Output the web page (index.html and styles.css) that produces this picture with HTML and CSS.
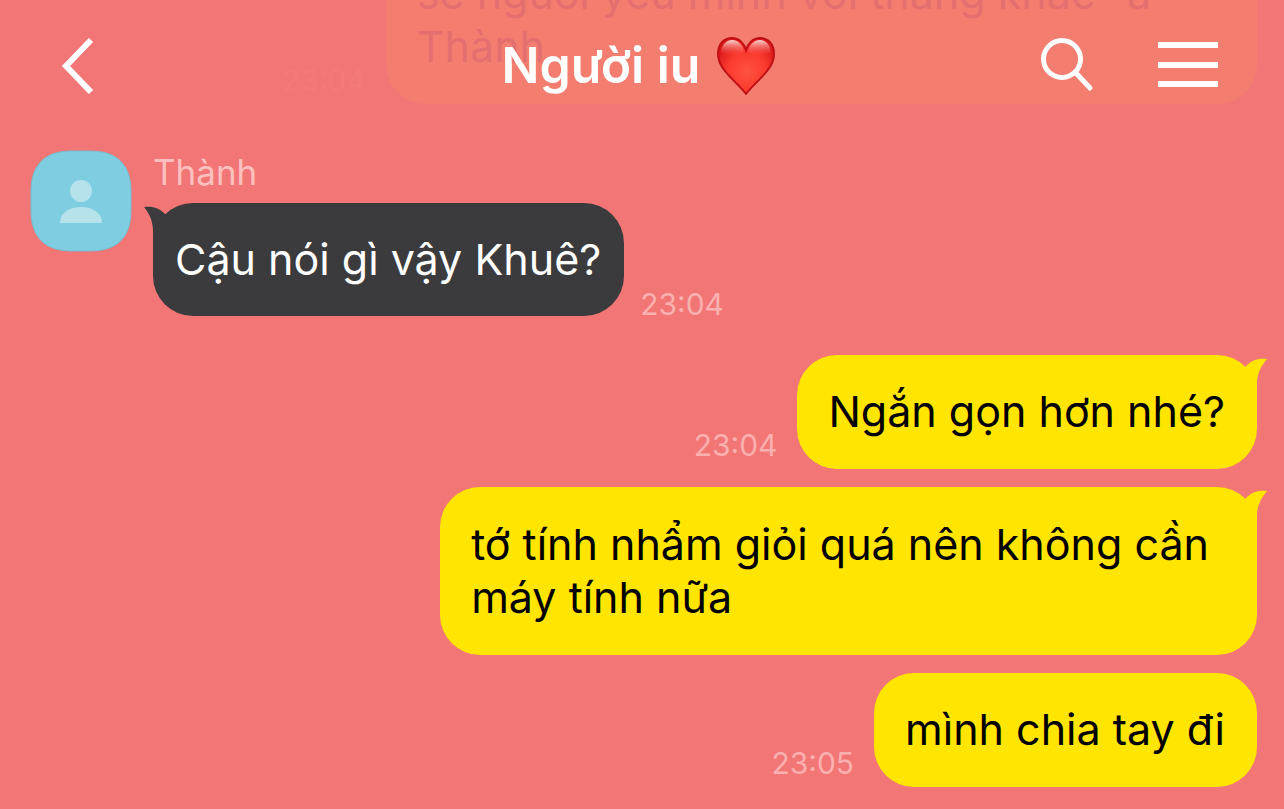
FILE: index.html
```html
<!DOCTYPE html>
<html lang="vi">
<head>
  <meta charset="UTF-8" />
  <meta name="viewport" content="width=device-width, initial-scale=1.0"/>
  <title>Người iu</title>
  <link rel="stylesheet" href="styles.css">
</head>
<body>
  <header class="topbar">
    <button type="button" class="icon-btn back" aria-label="Quay lại">
      <svg width="34" height="58" viewBox="0 0 34 58"><path d="M31 4 6 30l25 26" fill="none" stroke="#fff" stroke-width="6"/></svg>
    </button>
    <h1 class="title">
      Người iu
      <svg class="heart" width="60" height="60" viewBox="0 0 60 60" role="img" aria-label="Trái tim">
        <defs>
          <radialGradient id="heartFill" cx="52%" cy="60%" r="58%">
            <stop offset="0" stop-color="#ff5240"/>
            <stop offset="0.6" stop-color="#fb3a2e"/>
            <stop offset="1" stop-color="#dc1a1a"/>
          </radialGradient>
          <linearGradient id="heartShine" x1="0" y1="0" x2="0" y2="1">
            <stop offset="0" stop-color="#ffe9e4" stop-opacity="0.9"/>
            <stop offset="1" stop-color="#ff6a5c" stop-opacity="0"/>
          </linearGradient>
        </defs>
        <path d="M30 59C25 52 15 44 9 36 4 30 2 25 2 19 2 9 8 3 16 3c7 0 12 5 14 12C32 8 37 3 44 3c8 0 14 6 14 16 0 6-2 11-7 17C45 44 35 52 30 59Z" fill="url(#heartFill)" stroke="#c01015" stroke-width="2"/>
        <path d="M5 17C6 9 11 5 16 5c6 0 10 4 12 11-4 5-18 6-23 1Z" fill="url(#heartShine)"/>
        <path d="M55 17C54 9 49 5 44 5c-6 0-10 4-12 11 4 5 18 6 23 1Z" fill="url(#heartShine)"/>
      </svg>
    </h1>
    <div class="actions">
      <button type="button" class="icon-btn" aria-label="Tìm kiếm">
        <svg width="54" height="54" viewBox="0 0 54 54"><circle cx="22" cy="21" r="18.5" fill="none" stroke="#fff" stroke-width="5"/><path d="m35 34 15 16" stroke="#fff" stroke-width="5" stroke-linecap="round"/></svg>
      </button>
      <button type="button" class="icon-btn" aria-label="Menu">
        <svg width="60" height="46" viewBox="0 0 60 46"><path d="M0 3h60M0 23h60M0 42h60" stroke="#fff" stroke-width="6"/></svg>
      </button>
    </div>
  </header>

  <main class="chat">
    <div class="row mine">
      <time class="time">23:04</time>
      <p class="bubble">sẻ người yêu mình với thằng khác" à Thành</p>
    </div>

    <div class="row theirs">
      <svg class="avatar" width="102" height="102" viewBox="0 0 102 102">
        <path d="M41 1H61C87 1 101 15 101 41V61C101 87 87 101 61 101H41C15 101 1 87 1 61V41C1 15 15 1 41 1Z" fill="#7fcde0" stroke="#79bccd"/>
        <circle cx="51" cy="41" r="11" fill="#b6e2ec"/>
        <path d="M30 73c0-10 9-16 21-16s21 6 21 16Z" fill="#b6e2ec"/>
      </svg>
      <div class="content">
        <div class="name">Thành</div>
        <p class="bubble">
          <svg class="tail" width="30" height="40" viewBox="0 0 30 40"><path d="M0 4C9 3 15 5 21 11L30 20V40H9V28C9 18 5 10 0 4Z" fill="#3b3b3d"/></svg>
          Cậu nói gì vậy Khuê?
        </p>
      </div>
      <time class="time">23:04</time>
    </div>

    <div class="row mine">
      <time class="time">23:04</time>
      <p class="bubble">
        <svg class="tail" width="30" height="40" viewBox="0 0 30 40"><path d="M30 4C21 3 15 5 9 11L0 20V40H20V28C20 18 25 10 30 4Z" fill="#ffe500"/></svg>
        Ngắn gọn hơn nhé?
      </p>
    </div>

    <div class="row mine">
      <p class="bubble long">
        <svg class="tail" width="30" height="40" viewBox="0 0 30 40"><path d="M30 4C21 3 15 5 9 11L0 20V40H20V28C20 18 25 10 30 4Z" fill="#ffe500"/></svg>
        tớ tính nhẩm giỏi quá nên không cần<br>máy tính nữa
      </p>
    </div>

    <div class="row mine">
      <time class="time">23:05</time>
      <p class="bubble">mình chia tay đi</p>
    </div>
  </main>
</body>
</html>
```
FILE: styles.css
```css
* {
  box-sizing: border-box;
}
body {
  margin: 0;
  background: #f27676;
  font-family: Inter, 'Noto Sans', sans-serif;
  color: #000;
}

/* translucent bar, older messages show through it */
.topbar {
  position: fixed;
  top: 0;
  left: 0;
  right: 0;
  z-index: 2;
  display: grid;
  grid-template-columns: 1fr auto 1fr;
  align-items: center;
  height: 130px;
  padding: 0 66px 0 60px;
  background: rgba(242, 118, 118, 0.94);
}
.icon-btn {
  display: flex;
  padding: 0;
  border: none;
  background: none;
  cursor: pointer;
}
.back {
  justify-self: start;
}
.title {
  display: flex;
  align-items: center;
  gap: 16px;
  margin: 0;
  font-size: 50px;
  font-weight: 600;
  color: #fff;
}
.actions {
  display: flex;
  align-items: center;
  justify-content: flex-end;
  gap: 64px;
}

/* the thread sticks to its newest message */
.chat {
  display: flex;
  flex-direction: column;
  justify-content: flex-end;
  gap: 18px;
  height: 100vh;
  padding: 0 27px 22px 30px;
  overflow: hidden;
}
.row {
  display: flex;
  flex-shrink: 0;
  align-items: flex-end;
}
.mine {
  justify-content: flex-end;
  gap: 20px;
}
.theirs {
  gap: 16px;
  margin: 28px 0 21px;
}
.avatar {
  align-self: flex-start;
  margin-right: 5px;
}
.name {
  margin-bottom: 9px;
  font-size: 35px;
  line-height: 44px;
  color: #fcc0bf;
}
.bubble {
  position: relative;
  margin: 0;
  padding: 30px 32px 31px 31px;
  border-radius: 40px;
  font-size: 43px;
  line-height: 53px;
}
.mine .bubble {
  max-width: 71%;
  background: #ffe500;
}
.mine .long {
  padding: 31px 48px 31px 31px;
}
.theirs .bubble {
  padding: 30px 23px 30px 22px;
  background: #3b3b3d;
  color: #fff;
}
.tail {
  position: absolute;
  top: 0;
}
.mine .tail {
  right: -10px;
}
.theirs .tail {
  left: -9px;
}
.time {
  font-size: 30px;
  line-height: 36px;
  color: #f9b0ae;
}
.mine .time {
  margin-bottom: 6px;
}
.theirs .time {
  margin-bottom: -6px;
}
```
